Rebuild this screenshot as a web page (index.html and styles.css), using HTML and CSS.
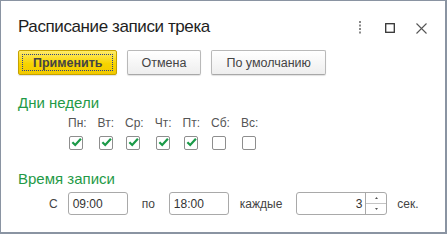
FILE: index.html
```html
<!DOCTYPE html>
<html lang="ru">
<head>
<meta charset="utf-8">
<title>Расписание записи трека</title>
<link rel="stylesheet" href="styles.css">
</head>
<body>
<div class="window">
  <div class="titlebar">
    <div class="title">Расписание записи трека</div>
    <div class="wincontrols">
      <svg class="ic-more" width="4" height="13" viewBox="0 0 4 13"><rect x="1" y="0" width="2" height="2" fill="#888"/><rect x="1" y="3.5" width="2" height="2" fill="#888"/><rect x="1" y="7" width="2" height="2" fill="#888"/><rect x="1" y="10.5" width="2" height="2" fill="#888"/></svg>
      <svg class="ic-max" width="10" height="10" viewBox="0 0 10 10"><rect x="0.7" y="0.7" width="8.6" height="8.6" fill="none" stroke="#333" stroke-width="1.3"/></svg>
      <svg class="ic-close" width="11" height="11" viewBox="0 0 11 11"><path d="M0.5 0.5 L10.5 10.5 M10.5 0.5 L0.5 10.5" stroke="#555" stroke-width="1.1" fill="none"/></svg>
    </div>
  </div>
  <div class="toolbar">
    <button class="btn btn-default"><span class="focus">Применить</span></button>
    <button class="btn">Отмена</button>
    <button class="btn">По умолчанию</button>
  </div>
  <div class="group-title">Дни недели</div>
  <div class="days">
    <div class="day"><span class="day-label">Пн:</span><span class="check on"><svg width="12" height="12" viewBox="0 0 12 12"><path d="M1.5 6.2 L4.6 9.3 L10.8 2.4" fill="none" stroke="#1a9a48" stroke-width="2.4"/></svg></span></div>
    <div class="day"><span class="day-label">Вт:</span><span class="check on"><svg width="12" height="12" viewBox="0 0 12 12"><path d="M1.5 6.2 L4.6 9.3 L10.8 2.4" fill="none" stroke="#1a9a48" stroke-width="2.4"/></svg></span></div>
    <div class="day"><span class="day-label">Ср:</span><span class="check on"><svg width="12" height="12" viewBox="0 0 12 12"><path d="M1.5 6.2 L4.6 9.3 L10.8 2.4" fill="none" stroke="#1a9a48" stroke-width="2.4"/></svg></span></div>
    <div class="day"><span class="day-label">Чт:</span><span class="check on"><svg width="12" height="12" viewBox="0 0 12 12"><path d="M1.5 6.2 L4.6 9.3 L10.8 2.4" fill="none" stroke="#1a9a48" stroke-width="2.4"/></svg></span></div>
    <div class="day"><span class="day-label">Пт:</span><span class="check on"><svg width="12" height="12" viewBox="0 0 12 12"><path d="M1.5 6.2 L4.6 9.3 L10.8 2.4" fill="none" stroke="#1a9a48" stroke-width="2.4"/></svg></span></div>
    <div class="day"><span class="day-label">Сб:</span><span class="check"></span></div>
    <div class="day"><span class="day-label">Вс:</span><span class="check"></span></div>
  </div>
  <div class="group-title second">Время записи</div>
  <div class="timerow">
    <span class="lbl lbl-first">С</span>
    <div class="field">09:00</div>
    <span class="lbl lbl-to">по</span>
    <div class="field">18:00</div>
    <span class="lbl">каждые</span>
    <div class="field spin">
      <span class="spin-value">3</span>
      <span class="spin-btns">
        <span class="spin-up"><svg width="3" height="2" viewBox="0 0 3 2"><path d="M0 2 L1.5 0 L3 2 Z" fill="#555"/></svg></span>
        <span class="spin-down"><svg width="3" height="2" viewBox="0 0 3 2"><path d="M0 0 L1.5 2 L3 0 Z" fill="#555"/></svg></span>
      </span>
    </div>
    <span class="lbl lbl-last">сек.</span>
  </div>
</div>
</body>
</html>
```

FILE: styles.css
```css
html, body {
  margin: 0;
  padding: 0;
  background: #fff;
}
body {
  font-family: "Liberation Sans", Arial, sans-serif;
}
.window {
  width: 447px;
  height: 234px;
  box-sizing: border-box;
  border: 1px solid #8a94a2;
  border-right-width: 2px;
  border-bottom-width: 2px;
  background: #fff;
  padding: 15px 0 0 17px;
  display: flex;
  flex-direction: column;
}
.titlebar {
  display: flex;
  align-items: center;
  height: 22px;
}
.title {
  font-size: 17px;
  letter-spacing: -0.4px;
  line-height: 22px;
  color: #1e1e1e;
  flex: 1;
}
.wincontrols {
  display: flex;
  align-items: center;
  margin-right: 18px;
}
.ic-more {
  margin-right: 23px;
  margin-top: 1px;
}
.ic-max {
  margin-right: 21px;
  margin-top: 2px;
}
.ic-close {
  margin-top: 2px;
}
.toolbar {
  display: flex;
  gap: 10px;
  margin-top: 12px;
}
.btn {
  height: 25px;
  min-width: 72px;
  box-sizing: border-box;
  padding: 0 14px;
  font-family: "Liberation Sans", Arial, sans-serif;
  font-size: 12.5px;
  color: #444;
  background: linear-gradient(#ffffff, #eeeeee);
  border: 1px solid #b9b9b9;
  border-bottom-color: #a8a8a8;
  border-radius: 2px;
  box-shadow: 0 1px 1px rgba(0,0,0,0.12);
}
.btn-default {
  padding: 3px;
  font-weight: bold;
  color: #444;
  background: linear-gradient(#ffec6a, #f7d400 55%, #f1c900);
  border-color: #c6a200;
}
.btn-default .focus {
  display: flex;
  align-items: center;
  height: 100%;
  box-sizing: border-box;
  padding: 0 9px 0 10px;
  border: 1px dotted #2c3f8a;
}
.group-title {
  font-size: 15px;
  line-height: 18px;
  color: #1f9a47;
  margin-top: 19px;
}
.group-title.second {
  margin-top: 20px;
}
.days {
  display: flex;
  gap: 11px;
  margin-left: 50px;
  margin-top: 4px;
}
.day {
  display: flex;
  flex-direction: column;
  align-items: flex-start;
}
.day-label {
  font-size: 12px;
  line-height: 14px;
  color: #555;
}
.check {
  width: 14px;
  height: 14px;
  box-sizing: border-box;
  margin-top: 6px;
  margin-left: 1px;
  border: 1px solid #8e8e8e;
  border-radius: 2px;
  background: #fff;
  display: flex;
  align-items: center;
  justify-content: center;
}
.check svg {
  margin-top: -2px;
  margin-left: 1px;
}
.timerow {
  display: flex;
  align-items: center;
  margin-top: 4px;
  margin-left: 31px;
  height: 23px;
}
.lbl {
  font-size: 12px;
  color: #444;
  margin: 0 14px 0 11px;
}
.lbl-first {
  margin: 0 10px 0 0;
}
.lbl-to {
  margin-left: 14px;
}
.lbl-last {
  margin: 0 0 0 10px;
}
.field {
  width: 60px;
  height: 23px;
  box-sizing: border-box;
  border: 1px solid #a9a9a9;
  border-radius: 3px;
  font-size: 12px;
  color: #333;
  padding-left: 4px;
  display: flex;
  align-items: center;
}
.field.spin {
  width: 91px;
  padding-left: 0;
}
.spin-value {
  flex: 1;
  text-align: right;
  padding-right: 3px;
}
.spin-btns {
  width: 20px;
  height: 100%;
  border-left: 1px solid #a9a9a9;
  display: flex;
  flex-direction: column;
}
.spin-up, .spin-down {
  flex: 1;
  display: flex;
  align-items: center;
  justify-content: center;
}
.spin-up {
  border-bottom: 1px solid #c4c4c4;
}
```
